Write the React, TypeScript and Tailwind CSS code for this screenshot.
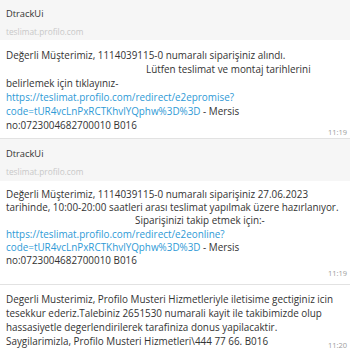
import React from "react";

const LINK = "text-[#2e9ad6]";

function Header({ tall }: { tall?: boolean }) {
  return (
    <div className={`bg-[#f6f6f6] px-[6px] ${tall ? "h-[42px] pt-[9px]" : "h-[40px] pt-[8px]"}`}>
      <div className="text-[9.3px] leading-[12px] text-[#333]">DtrackUi</div>
      <div className="text-[8.3px] leading-[11px] mt-[6px] text-[#c8c8c8]">teslimat.profilo.com</div>
    </div>
  );
}

function Time({ t, cls }: { t: string; cls: string }) {
  return (
    <div className={`flex justify-end pr-[3px] ${cls}`}>
      <span className="text-[7.5px] leading-[9px] text-[#9c9c9c]">{t}</span>
    </div>
  );
}

export default function App() {
  return (
    <div
      className="w-[350px] h-[350px] overflow-hidden bg-white text-[#333] text-[9.9px]"
      style={{ fontFamily: '"Open Sans", "Noto Sans", sans-serif' }}
    >
      {/* card 1 */}
      <div className="border-b border-[#e2e2e2]">
        <Header />
        <div className="px-[6px] pt-[8px] leading-[14px] whitespace-nowrap">
          <div>Değerli Müşterimiz, 1114039115-0 numaralı siparişiniz alındı.</div>
          <div className="pl-[140px]">Lütfen teslimat ve montaj tarihlerini</div>
          <div>belirlemek için tıklayınız-</div>
          <div className={LINK}>https://teslimat.profilo.com/redirect/e2epromise?</div>
          <div>
            <span className={LINK}>code=tUR4vcLnPxRCTKhvlYQphw%3D%3D</span> - Mersis
          </div>
          <div>no:0723004682700010 B016</div>
        </div>
        <Time t="11:19" cls="-mt-[4.5px] pb-[1.5px]" />
      </div>

      {/* card 2 */}
      <div className="border-b border-[#e2e2e2]">
        <Header tall />
        <div className="px-[6px] pt-[7px] leading-[13.2px] whitespace-nowrap">
          <div>Değerli Müşterimiz, 1114039115-0 numaralı siparişiniz 27.06.2023</div>
          <div>tarihinde, 10:00-20:00 saatleri arası teslimat yapılmak üzere hazırlanıyor.</div>
          <div className="pl-[129px]">Siparişinizi takip etmek için:-</div>
          <div className={LINK}>https://teslimat.profilo.com/redirect/e2eonline?</div>
          <div>
            <span className={LINK}>code=tUR4vcLnPxRCTKhvlYQphw%3D%3D</span> - Mersis
          </div>
          <div>no:0723004682700010 B016</div>
        </div>
        <Time t="11:19" cls="mt-[2px] pb-[5.5px]" />
      </div>

      {/* card 3 */}
      <div className="px-[6px] pt-[7px] leading-[14px] whitespace-nowrap">
        <div>Degerli Musterimiz, Profilo Musteri Hizmetleriyle iletisime gectiginiz icin</div>
        <div>tesekkur ederiz.Talebiniz 2651530 numarali kayit ile takibimizde olup</div>
        <div>hassasiyetle degerlendirilerek tarafiniza donus yapilacaktir.</div>
        <div className="flex justify-between items-end">
          <span>Saygilarimizla, Profilo Musteri Hizmetleri\444 77 66. B016</span>
          <span className="text-[7.5px] leading-[9px] text-[#9c9c9c] -mr-[3px] translate-y-[2px]">11:20</span>
        </div>
      </div>
    </div>
  );
}
